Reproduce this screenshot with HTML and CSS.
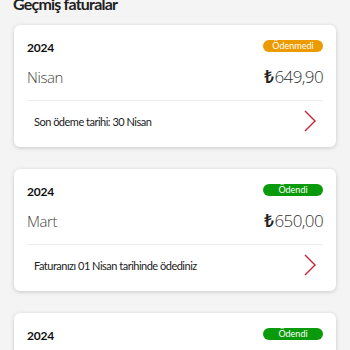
FILE: index.html
```html
<!DOCTYPE html>
<html lang="tr">
<head>
<meta charset="utf-8">
<link rel="stylesheet" href="styles.css">
</head>
<body>
<h1 class="title">Geçmiş faturalar</h1>
<div class="list">
  <div class="card">
    <div class="head">
      <span class="year">2024</span>
      <span class="badge unpaid">Ödenmedi</span>
    </div>
    <div class="mid">
      <span class="month">Nisan</span>
      <span class="amount"><span class="tl">₺</span>649,90</span>
    </div>
    <div class="foot">
      <span class="note">Son ödeme tarihi: 30 Nisan</span>
      <svg class="chev" width="14" height="22" viewBox="0 0 14 22"><polyline points="2,1 12,11 2,21" fill="none" stroke="#c8202e" stroke-width="1.4"/></svg>
    </div>
  </div>
  <div class="card">
    <div class="head">
      <span class="year">2024</span>
      <span class="badge paid">Ödendi</span>
    </div>
    <div class="mid">
      <span class="month">Mart</span>
      <span class="amount"><span class="tl">₺</span>650,00</span>
    </div>
    <div class="foot">
      <span class="note">Faturanızı 01 Nisan tarihinde ödediniz</span>
      <svg class="chev" width="14" height="22" viewBox="0 0 14 22"><polyline points="2,1 12,11 2,21" fill="none" stroke="#c8202e" stroke-width="1.4"/></svg>
    </div>
  </div>
  <div class="card">
    <div class="head">
      <span class="year">2024</span>
      <span class="badge paid">Ödendi</span>
    </div>
    <div class="mid">
      <span class="month">Şubat</span>
      <span class="amount"><span class="tl">₺</span>650,00</span>
    </div>
    <div class="foot">
      <span class="note">Faturanızı 01 Mart tarihinde ödediniz</span>
      <svg class="chev" width="14" height="22" viewBox="0 0 14 22"><polyline points="2,1 12,11 2,21" fill="none" stroke="#c8202e" stroke-width="1.4"/></svg>
    </div>
  </div>
</div>
</body>
</html>
```
FILE: styles.css
```css
html, body {
  margin: 0;
  padding: 0;
  background: #f4f4f4;
  font-family: Lato, "Noto Sans", sans-serif;
  color: #222;
  overflow: hidden;
}
.title {
  margin: -6px 0 0 13px;
  font-size: 16px;
  line-height: 20px;
  font-weight: 700;
  letter-spacing: -0.8px;
  color: #222;
}
.list {
  display: flex;
  flex-direction: column;
  gap: 22px;
  margin: 11px 14px 0 14px;
}
.card {
  background: #fff;
  border-radius: 6px;
  box-shadow: 0 1px 4px rgba(0,0,0,0.18);
  padding: 14px 13px 6px 13px;
  height: 122px;
  box-sizing: border-box;
  display: flex;
  flex-direction: column;
}
.head {
  display: flex;
  justify-content: space-between;
  align-items: center;
  height: 14px;
}
.year {
  font-size: 12px;
  font-weight: 700;
  color: #111;
  margin-top: 2px;
  letter-spacing: -0.2px;
}
.badge {
  width: 60px;
  height: 12px;
  border-radius: 6px;
  color: #fff;
  font-size: 9px;
  line-height: 12px;
  text-align: center;
}
.unpaid { background: #eb9a00; }
.paid { background: #0b9a0b; }
.mid {
  display: flex;
  justify-content: space-between;
  align-items: baseline;
  height: 48px;
  padding-top: 12px;
  box-sizing: border-box;
  border-bottom: 1px solid #eeeeee;
}
.month {
  font-family: "Open Sans", Lato, sans-serif;
  font-size: 15px;
  font-weight: 300;
  letter-spacing: -0.4px;
  color: #444;
}
.amount {
  font-family: "Open Sans", Lato, sans-serif;
  font-size: 17px;
  font-weight: 300;
  letter-spacing: -0.6px;
  color: #333;
}
.tl {
  font-family: "Noto Sans", sans-serif;
  font-weight: 600;
  font-size: 17px;
  color: #222;
  margin-right: 1px;
}
.foot {
  display: flex;
  justify-content: space-between;
  align-items: center;
  height: 40px;
  padding-left: 7px;
  padding-right: 6px;
}
.note {
  font-size: 11px;
  letter-spacing: -0.5px;
  color: #222;
}
.chev { display: block; }
```
